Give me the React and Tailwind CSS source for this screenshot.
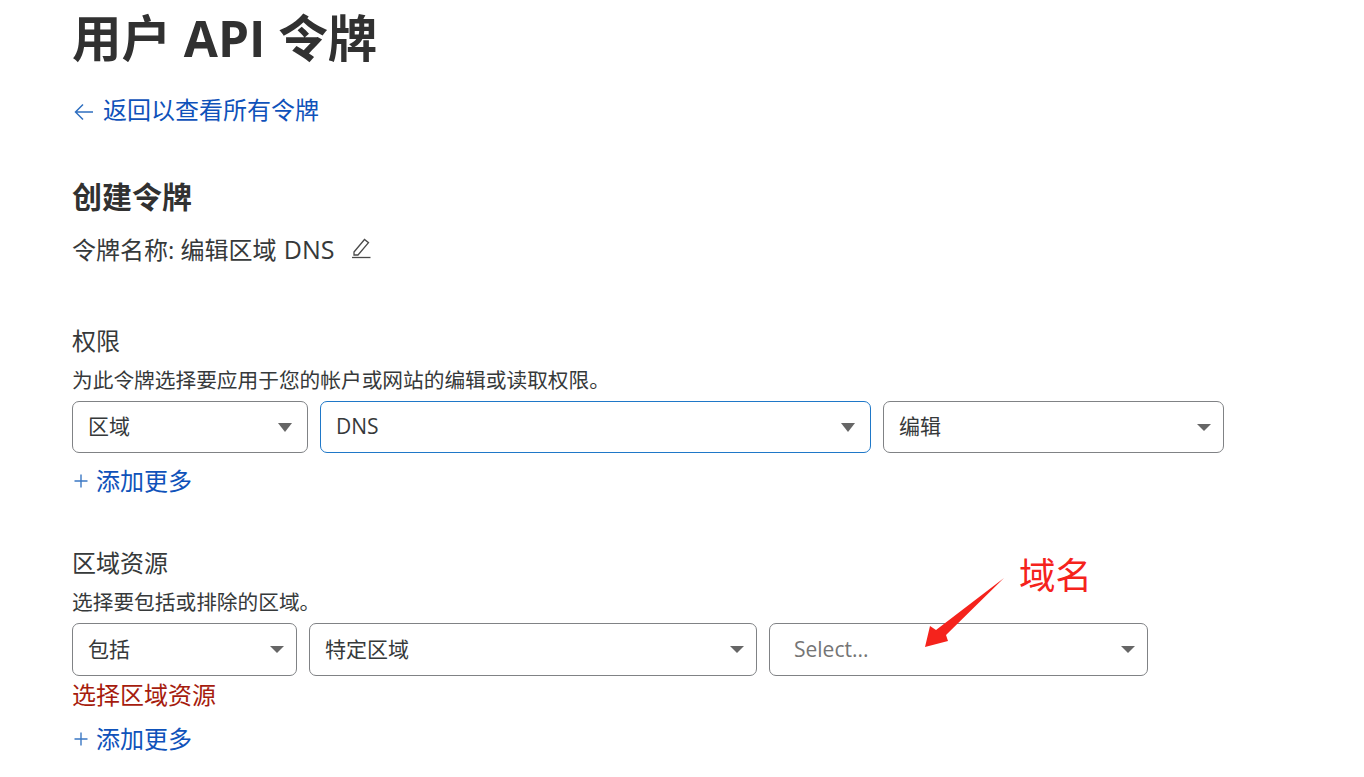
const FONT = "font-['Open_Sans','Noto_Sans_CJK_SC',sans-serif]";

const Select = ({ label, width, focused, placeholder, height = 'h-[53px]', arrow = 'border-x-[7px] border-t-[9px]', pad = 'pr-[11px]' }) => (
    <div
        className={`flex items-center justify-between rounded-[7px] border bg-white text-[21px] ${height} ${pad} ${width} ${focused ? 'border-[#1f78c8]' : 'border-[#808285]'} ${placeholder ? 'pl-6 text-[#757575]' : 'pl-[15px] text-[#36393a]'}`}
    >
        <span>{label}</span>
        <span className={`h-0 w-0 border-x-transparent border-t-[#666666] ${arrow}`} />
    </div>
);

const AddMore = ({ className }) => (
    <div className={`flex h-9 items-center text-2xl text-[#0f52ba] ${className}`}>
        <svg width="16" height="16" viewBox="0 0 16 16" fill="none" stroke="#3b78c4" strokeWidth="1.4" className="mr-[7px] ml-[1px]">
            <path d="M8 1.5V14.5M1.5 8H14.5" />
        </svg>
        <span>添加更多</span>
    </div>
);

export default function App() {
    return (
        <div className={`relative h-[777px] w-full overflow-hidden bg-white pl-[72px] text-[#36393a] ${FONT}`}>
            <h1 className="mt-[3px] h-[70px] text-[49.5px] leading-[70px] font-bold text-[#313131]">用户 API 令牌</h1>

            <div className="mt-[19px] flex h-9 items-center text-2xl text-[#0f52ba]">
                <svg width="20" height="18" viewBox="0 0 20 18" fill="none" stroke="#2f6fc0" strokeWidth="1.5" className="mt-[3px] mr-[9px] ml-[2px]">
                    <path d="M19 9H2M9 1.5 1.5 9 9 16.5" />
                </svg>
                <span>返回以查看所有令牌</span>
            </div>

            <h2 className="mt-[47px] h-11 text-[30px] leading-[44px] font-bold text-[#313131]">创建令牌</h2>

            <div className="mt-[13px] flex h-9 items-center text-2xl whitespace-pre">
                <span>令牌名称: </span>
                <span>编辑区域 </span>
                <span className="ml-px text-[25px]">DNS</span>
                <svg width="22" height="22" viewBox="0 0 22 22" fill="none" stroke="#4a4a4a" strokeWidth="1.3" className="ml-[16px] -translate-y-[2px]">
                    <path d="M4 15 14.5 2.5 l4 3.2 L8 18 H4 Z" />
                    <path d="M2 20.5 H20.5" />
                </svg>
            </div>

            <section className="mt-[55px]">
                <h3 className="h-9 text-2xl leading-9 font-normal">权限</h3>
                <p className="mt-[7px] h-7 text-[20.7px] leading-7">为此令牌选择要应用于您的帐户或网站的编辑或读取权限。</p>
                <div className="mt-[7px] flex gap-3">
                    <Select label="区域" width="w-[236px]" height="h-[52px]" pad="pr-[15px]" />
                    <Select label="DNS" width="w-[551px]" height="h-[52px]" pad="pr-[15px]" focused />
                    <Select label="编辑" width="w-[341px]" height="h-[52px]" pad="pr-[12px]" arrow="border-x-[7px] border-t-[7px]" />
                </div>
                <AddMore className="mt-[10px]" />
            </section>

            <section className="mt-[46px]">
                <h3 className="h-9 text-2xl leading-9 font-normal">区域资源</h3>
                <p className="mt-[7px] h-7 text-[20.7px] leading-7">选择要包括或排除的区域。</p>
                <div className="mt-[7px] flex gap-3">
                    <Select label="包括" width="w-[225px]" pad="pr-[12px]" arrow="border-x-[7px] border-t-[7px]" />
                    <Select label="特定区域" width="w-[448px]" pad="pr-[12px]" arrow="border-x-[7px] border-t-[7px]" />
                    <Select label="Select..." width="w-[379px]" pad="pr-[12px]" arrow="border-x-[7px] border-t-[7px]" placeholder />
                </div>
                <p className="mt-[1px] h-9 text-2xl leading-9 text-[#a61c0e]">选择区域资源</p>
                <AddMore className="mt-[8px]" />
            </section>

            {/* red annotation pasted over the form */}
            <span className="absolute top-[549px] left-[1019px] text-[36.5px] leading-[52px] text-[#f5231c]">域名</span>
            <svg className="absolute top-[570px] left-[915px]" width="100" height="85" viewBox="915 570 100 85">
                <path d="M1004 578 L946 635 L948 641 L925 647 L930 626 L936 630 Z" fill="#f5231c" />
            </svg>
        </div>
    );
}
